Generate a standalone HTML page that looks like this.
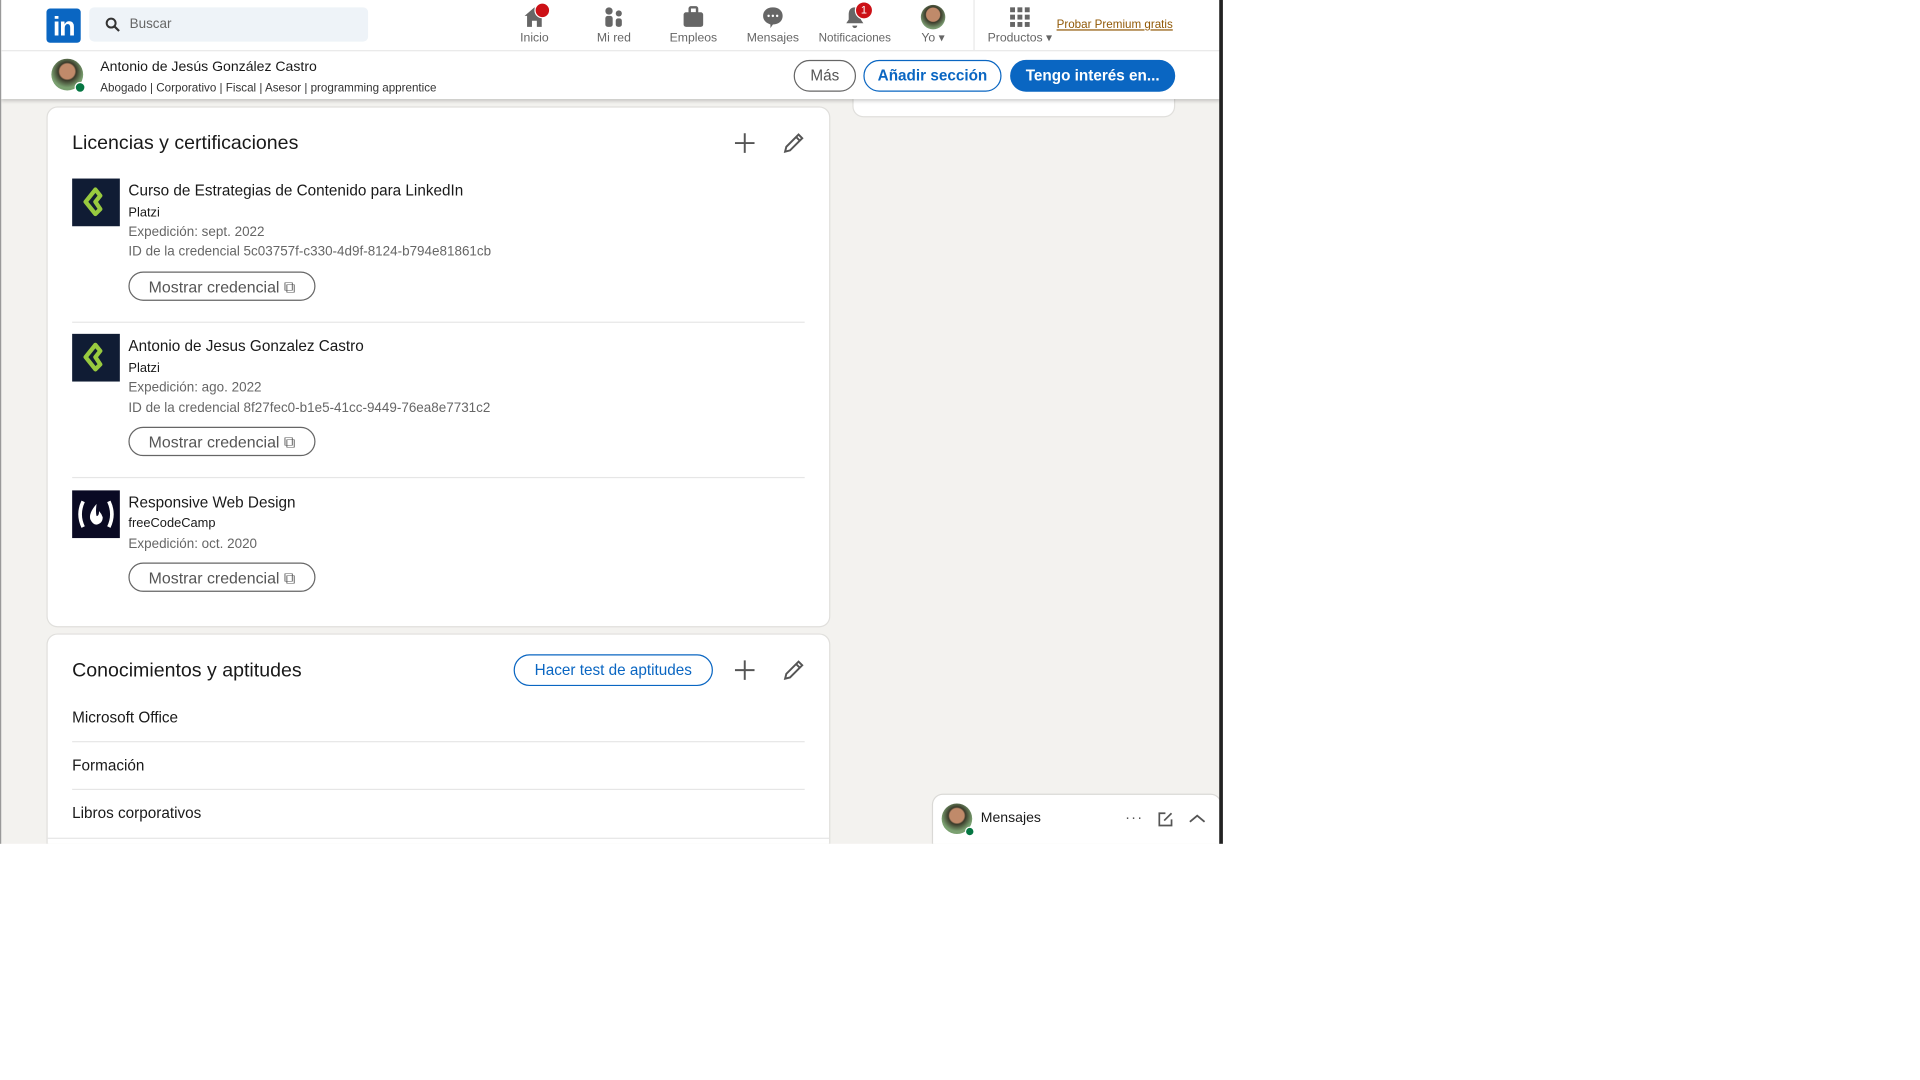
<!DOCTYPE html>
<html><head><meta charset="utf-8"><style>
html,body{margin:0;padding:0;background:#fff;width:1920px;height:1080px;overflow:hidden}
#w{position:absolute;left:0;top:0;width:1570px;height:883px;transform:scale(1.2229);transform-origin:0 0;font-family:"Liberation Sans",sans-serif;color:rgba(0,0,0,.9)}
#app{position:absolute;left:0;top:0;width:997px;height:690px;background:#f3f2ef;overflow:hidden;border-left:1px solid #999}
#rb{position:absolute;left:997px;top:0;width:3px;height:690px;background:#222}
.abs{position:absolute}
.top{left:0;top:0;width:997px;height:41px;background:#fff;border-bottom:1px solid #e8e8e8}
.sub{left:0;top:42px;width:997px;height:39px;background:#fff;box-shadow:0 2px 3px rgba(0,0,0,.2)}
.nav{position:absolute;top:4px;text-align:center;font-size:10px;color:#666;width:60px}
.nav .ic{width:20px;height:20px;margin:0 auto 2px;position:relative}
.card{background:#fff;border-radius:8px;box-shadow:0 0 0 1px rgba(0,0,0,.08)}
.h2{font-size:16px;color:rgba(0,0,0,.9)}
.t{font-size:12.5px}
.s{font-size:11px;color:#666}
.btn{border:1px solid #666;border-radius:14px;height:24px;line-height:23px;font-size:13px;color:#555;box-sizing:border-box;text-align:center}
.logo{width:39px;height:39px;background:#101c34}
.hr{height:1px;background:#e6e6e6}
</style></head><body><div id="w">
<div id="app">
<div class="abs card" style="left:697px;top:60px;width:262px;height:35px"><div class="abs" style="left:88px;top:12px;font-size:11px;color:#666">Mostrar más</div></div>
<div class="abs top">
 <div class="abs" style="left:37px;top:7px;width:28px;height:28px;background:#0a66c2;border-radius:3px;color:#fff;font-weight:bold;font-size:22px;line-height:30px;text-align:center;letter-spacing:-1px">in</div>
 <div class="abs" style="left:72px;top:6px;width:228px;height:28px;background:#eef3f8;border-radius:4px">
  <svg class="abs" style="left:13px;top:8px" width="13" height="13" viewBox="0 0 16 16"><circle cx="6" cy="6" r="4.5" fill="none" stroke="#333" stroke-width="2"/><path d="M9.5 9.5L14 14" stroke="#333" stroke-width="2.2"/></svg>
  <span class="abs" style="left:33px;top:8px;font-size:11px;color:#666">Buscar</span></div>
 <div class="nav" style="left:406px"><div class="ic"><svg width="20" height="20" viewBox="0 0 20 20"><path d="M10 2L2 9h2v9h4v-5h4v5h4V9h2z" fill="#666"/></svg><span class="abs" style="right:-3px;top:-2px;width:11px;height:11px;border-radius:50%;background:#cc1016;border:1px solid #fff"></span></div>Inicio</div>
 <div class="nav" style="left:471px"><div class="ic"><svg width="20" height="20" viewBox="0 0 20 20"><circle cx="6" cy="5" r="3" fill="#666"/><circle cx="14" cy="7" r="2.5" fill="#666"/><rect x="3" y="9" width="6" height="9" rx="2" fill="#666"/><rect x="11.5" y="11" width="5" height="7" rx="2" fill="#666"/></svg></div>Mi red</div>
 <div class="nav" style="left:536px"><div class="ic"><svg width="20" height="20" viewBox="0 0 20 20"><rect x="2" y="6" width="16" height="12" rx="2" fill="#666"/><rect x="7" y="2" width="6" height="5" rx="1" fill="none" stroke="#666" stroke-width="2"/></svg></div>Empleos</div>
 <div class="nav" style="left:601px"><div class="ic"><svg width="20" height="20" viewBox="0 0 20 20"><path d="M10 2c5 0 8 3 8 7s-3 7-8 7l-2 3v-3c-3-1-6-3-6-7s3-7 8-7z" fill="#666"/><circle cx="6.5" cy="9" r="1" fill="#fff"/><circle cx="10" cy="9" r="1" fill="#fff"/><circle cx="13.5" cy="9" r="1" fill="#fff"/></svg></div>Mensajes</div>
 <div class="nav" style="left:667px;width:62px;font-size:9.5px"><div class="ic"><svg width="20" height="20" viewBox="0 0 20 20"><path d="M10 2c-4 0-5 3-5 6v4l-2 3h14l-2-3V8c0-3-1-6-5-6zM8 17h4a2 2 0 01-4 0z" fill="#666"/></svg><span class="abs" style="right:-5px;top:-3px;width:13px;height:13px;border-radius:50%;background:#cc1016;color:#fff;font-size:9px;line-height:13px;border:1px solid #fff">1</span></div>Notificaciones</div>
 <div class="nav" style="left:732px"><div class="ic" style="border-radius:50%;background:radial-gradient(circle at 50% 40%,#c08a6a 35%,#3a3a2a 40%,#7a9a70 70%)"></div>Yo ▾</div>
 <div class="abs" style="left:795px;top:0;width:1px;height:41px;background:#e8e8e8"></div>
 <div class="nav" style="left:803px"><div class="ic"><svg width="20" height="20" viewBox="0 0 20 20" fill="#666"><rect x="2" y="2" width="4" height="4"/><rect x="8" y="2" width="4" height="4"/><rect x="14" y="2" width="4" height="4"/><rect x="2" y="8" width="4" height="4"/><rect x="8" y="8" width="4" height="4"/><rect x="14" y="8" width="4" height="4"/><rect x="2" y="14" width="4" height="4"/><rect x="8" y="14" width="4" height="4"/><rect x="14" y="14" width="4" height="4"/></svg></div>Productos ▾</div>
 <div class="abs" style="left:863px;top:15px;font-size:9.5px;color:#915907;text-decoration:underline">Probar Premium gratis</div>
</div>
<div class="abs sub">
 <div class="abs" style="left:41px;top:6px;width:26px;height:26px;border-radius:50%;background:radial-gradient(circle at 50% 40%,#c08a6a 30%,#3a3a2a 36%,#7aa070 65%)"></div>
 <div class="abs" style="left:60px;top:25px;width:7px;height:7px;border-radius:50%;background:#057642;border:1px solid #fff"></div>
 <div class="abs" style="left:81px;top:7px;font-size:11.5px">Antonio de Jesús González Castro</div>
 <div class="abs" style="left:81px;top:25px;font-size:9.5px;color:#333">Abogado | Corporativo | Fiscal | Asesor | programming apprentice</div>
 <div class="abs btn" style="left:648px;top:7px;width:51px;height:26px;line-height:25px;border-radius:13px;font-size:12.5px">Más</div>
 <div class="abs btn" style="left:705px;top:7px;width:113px;height:26px;line-height:25px;border-radius:13px;border-color:#0a66c2;color:#0a66c2;font-weight:bold;font-size:12.5px">Añadir sección</div>
 <div class="abs" style="left:825px;top:7px;width:135px;height:26px;line-height:26px;border-radius:13px;background:#0a66c2;color:#fff;font-weight:bold;font-size:12.5px;text-align:center">Tengo interés en...</div>
</div>

<div class="abs card" style="left:38px;top:88px;width:639px;height:424px">
 <div class="abs h2" style="left:20px;top:21px">Licencias y certificaciones</div>
 <svg class="abs" style="left:561px;top:20px" width="18" height="18" viewBox="0 0 18 18"><path d="M9 1v16M1 9h16" stroke="#555" stroke-width="1.6"/></svg>
 <svg class="abs" style="left:600px;top:19px" width="20" height="20" viewBox="0 0 20 20"><path d="M3 17l1-4L14 3l3 3L7 16z M12 5l3 3" fill="none" stroke="#555" stroke-width="1.6"/></svg>
 <div class="abs logo" style="left:20px;top:58px"><svg width="39" height="39" viewBox="0 0 39 39"><path d="M19 9l-8 10 8 10 4-4-4-6 4-5z" fill="none" stroke="#98ca3f" stroke-width="3.5" stroke-linejoin="round"/></svg></div>
 <div class="abs t" style="left:66px;top:61px">Curso de Estrategias de Contenido para LinkedIn</div>
 <div class="abs" style="left:66px;top:80px;font-size:10.5px">Platzi</div>
 <div class="abs s" style="left:66px;top:96px">Expedición: sept. 2022</div>
 <div class="abs s" style="left:66px;top:112px">ID de la credencial 5c03757f-c330-4d9f-8124-b794e81861cb</div>
 <div class="abs btn" style="left:66px;top:134px;width:153px">Mostrar credencial ⧉</div>
 <div class="abs hr" style="left:20px;top:175px;width:599px"></div>
 <div class="abs logo" style="left:20px;top:185px"><svg width="39" height="39" viewBox="0 0 39 39"><path d="M19 9l-8 10 8 10 4-4-4-6 4-5z" fill="none" stroke="#98ca3f" stroke-width="3.5" stroke-linejoin="round"/></svg></div>
 <div class="abs t" style="left:66px;top:188px">Antonio de Jesus Gonzalez Castro</div>
 <div class="abs" style="left:66px;top:207px;font-size:10.5px">Platzi</div>
 <div class="abs s" style="left:66px;top:223px">Expedición: ago. 2022</div>
 <div class="abs s" style="left:66px;top:240px">ID de la credencial 8f27fec0-b1e5-41cc-9449-76ea8e7731c2</div>
 <div class="abs btn" style="left:66px;top:261px;width:153px">Mostrar credencial ⧉</div>
 <div class="abs hr" style="left:20px;top:302px;width:599px"></div>
 <div class="abs logo" style="left:20px;top:313px;background:#0a0a23"><svg width="39" height="39" viewBox="0 0 39 39"><path d="M9 9q-5 10.5 0 21M30 9q5 10.5 0 21" fill="none" stroke="#fff" stroke-width="3"/><path d="M20 11q-7 8-5 13 2 4 5 4 5-1 5-6-1-3-3-5 0 4-2 4-1-3 0-10z" fill="#fff"/></svg></div>
 <div class="abs t" style="left:66px;top:316px">Responsive Web Design</div>
 <div class="abs" style="left:66px;top:334px;font-size:10.5px">freeCodeCamp</div>
 <div class="abs s" style="left:66px;top:351px">Expedición: oct. 2020</div>
 <div class="abs btn" style="left:66px;top:372px;width:153px">Mostrar credencial ⧉</div>
</div>

<div class="abs card" style="left:38px;top:519px;width:639px;height:200px">
 <div class="abs h2" style="left:20px;top:21px">Conocimientos y aptitudes</div>
 <div class="abs btn" style="left:381px;top:16px;width:163px;height:26px;line-height:25px;border-radius:13px;border-color:#0a66c2;color:#0a66c2;font-size:12.5px">Hacer test de aptitudes</div>
 <svg class="abs" style="left:561px;top:20px" width="18" height="18" viewBox="0 0 18 18"><path d="M9 1v16M1 9h16" stroke="#555" stroke-width="1.6"/></svg>
 <svg class="abs" style="left:600px;top:19px" width="20" height="20" viewBox="0 0 20 20"><path d="M3 17l1-4L14 3l3 3L7 16z M12 5l3 3" fill="none" stroke="#555" stroke-width="1.6"/></svg>
 <div class="abs t" style="left:20px;top:61px">Microsoft Office</div>
 <div class="abs hr" style="left:20px;top:87px;width:599px"></div>
 <div class="abs t" style="left:20px;top:100px">Formación</div>
 <div class="abs hr" style="left:20px;top:126px;width:599px"></div>
 <div class="abs t" style="left:20px;top:139px">Libros corporativos</div>
 <div class="abs hr" style="left:0;top:166px;width:639px"></div>
</div>

<div class="abs" style="left:762px;top:650px;width:235px;height:45px;background:#fff;border-radius:8px 8px 0 0;box-shadow:0 0 0 1px rgba(0,0,0,.1)">
 <div class="abs" style="left:7px;top:7px;width:25px;height:25px;border-radius:50%;background:radial-gradient(circle at 50% 40%,#c08a6a 30%,#3a3a2a 36%,#7aa070 65%)"></div>
 <div class="abs" style="left:26px;top:26px;width:6px;height:6px;border-radius:50%;background:#057642;border:1px solid #fff"></div>
 <div class="abs" style="left:39px;top:13px;font-size:11.5px">Mensajes</div>
 <div class="abs" style="left:157px;top:11px;font-size:12px;color:#555;letter-spacing:1px">···</div>
 <svg class="abs" style="left:184px;top:14px" width="12" height="12" viewBox="0 0 12 12"><path d="M6 1H1v10h10V6M5 7l6-6" fill="none" stroke="#555" stroke-width="1.4"/></svg>
 <svg class="abs" style="left:209px;top:15px" width="14" height="10" viewBox="0 0 14 10"><path d="M1 7l6-5 6 5" fill="none" stroke="#555" stroke-width="1.5"/></svg>
</div>
</div>
<div id="rb"></div>
</div></body></html>
